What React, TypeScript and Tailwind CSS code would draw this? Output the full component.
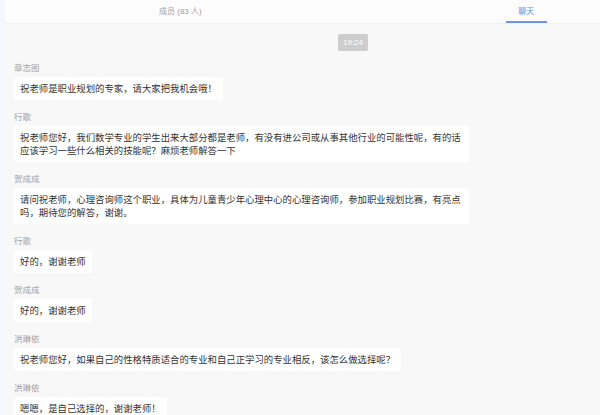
import React from "react";

type Msg = { name: string; text: string };

const messages: Msg[] = [
  { name: "章志图", text: "祝老师是职业规划的专家，请大家把我机会哦！" },
  {
    name: "行歌",
    text: "祝老师您好，我们数学专业的学生出来大部分都是老师，有没有进公司或从事其他行业的可能性呢，有的话应该学习一些什么相关的技能呢？麻烦老师解答一下",
  },
  {
    name: "贺成成",
    text: "请问祝老师，心理咨询师这个职业，具体为儿童青少年心理中心的心理咨询师，参加职业规划比赛，有亮点吗，期待您的解答，谢谢。",
  },
  { name: "行歌", text: "好的，谢谢老师" },
  { name: "贺成成", text: "好的，谢谢老师" },
  {
    name: "洪琳依",
    text: "祝老师您好，如果自己的性格特质适合的专业和自己正学习的专业相反，该怎么做选择呢？",
  },
  { name: "洪琳依", text: "嗯嗯，是自己选择的，谢谢老师！" },
];

export default function App() {
  return (
    <div
      className="flex h-[415px] w-[600px] overflow-hidden bg-[#f4f8fe]"
      style={{ fontFamily: '"Liberation Sans", "Noto Sans CJK SC", sans-serif' }}
    >
      <div className="ml-[5px] flex flex-1 flex-col bg-[#f8f8f8]">
        {/* tabs */}
        <div className="flex h-[24px] shrink-0 items-stretch border-b border-[#f0f0f0] bg-[#fcfcfc]">
          <div className="ml-[154px] flex items-center text-[8px] text-[#a0a0a0]">成员 (83 人)</div>
          <div className="ml-[304px] flex w-[41px] flex-col items-center justify-between">
            <span className="pt-[6px] text-[8px] text-[#5b8ce8]">聊天</span>
            <span className="h-[2px] w-full bg-[#6b96e6]" />
          </div>
        </div>

        {/* chat */}
        <div className="flex flex-col pl-[9px] pt-[10px]">
          <div className="ml-[324px] flex h-[17px] w-[30px] items-center justify-center rounded-[2px] bg-[#cdcdcd] text-[8px] text-white">
            19:24
          </div>
          {messages.map((m, i) => (
            <div key={i} className="mt-[11px] flex flex-col items-start">
              <div className="mb-[3px] text-[8.5px] leading-[12px] text-[#a0a0a0]">{m.name}</div>
              <div
                className="max-w-[455px] rounded-[2px] bg-white px-[6px] py-[5px] text-[9.4px] leading-[13px] text-[#333]"
                style={{ fontFamily: '"Noto Sans CJK SC", sans-serif' }}
              >
                {m.text}
              </div>
            </div>
          ))}
        </div>
      </div>
    </div>
  );
}
